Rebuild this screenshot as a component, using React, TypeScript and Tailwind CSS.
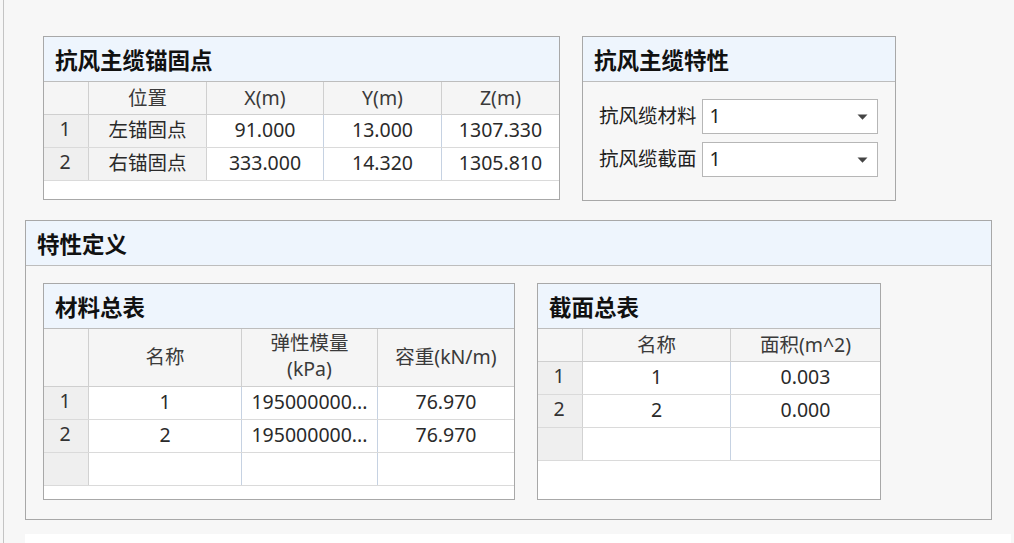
import React from "react";

type Col = { w?: number; label: React.ReactNode };

function Panel({
  title,
  className,
  children,
}: {
  title: string;
  className?: string;
  children?: React.ReactNode;
}) {
  return (
    <div
      className={
        "flex shrink-0 flex-col border border-[#a8a8a8] bg-[#f7f7f7] " + (className ?? "")
      }
    >
      <div className="flex h-[45px] shrink-0 items-center border-b border-[#bdbdbd] bg-[#eef5fd] pl-[11px]">
        <span className="font-['Noto_Sans_CJK_SC',sans-serif] text-[22.5px] font-bold leading-none text-[#111]">
          {title}
        </span>
      </div>
      {children}
    </div>
  );
}

function Grid({
  cols,
  headH,
  rows,
  greyCols = [],
}: {
  cols: Col[];
  headH: number;
  rows: (string | null)[][];
  greyCols?: number[];
}) {
  return (
    <div className="flex flex-1 flex-col bg-white">
      {/* column headers */}
      <div
        className="flex shrink-0 border-b border-[#cfcfcf] bg-[#f5f5f5]"
        style={{ height: headH }}
      >
        <div className="w-[45px] shrink-0 border-r border-[#cfcfcf]" />
        {cols.map((c, i) => (
          <div
            key={i}
            className={
              "flex items-center justify-center pb-[1px] text-center text-[#3a3a3a] " +
              (i < cols.length - 1 ? "shrink-0 border-r border-[#cfcfcf]" : "flex-1")
            }
            style={c.w ? { width: c.w } : undefined}
          >
            {c.label}
          </div>
        ))}
      </div>
      {rows.map((r, ri) => (
        <div key={ri} className="flex h-[33px] shrink-0 border-b border-[#dadada]">
          <div className="flex w-[45px] shrink-0 items-center justify-center border-r border-[#d2d2d2] bg-[#efefef] pr-[2px] pb-[4px] text-[#333]">
            {r[0] !== null ? String(ri + 1) : ""}
          </div>
          {cols.map((c, ci) => {
            const grey = greyCols.includes(ci);
            const last = ci === cols.length - 1;
            return (
              <div
                key={ci}
                className={
                  "flex items-center justify-center pb-[2px] text-[#2a2a2a] " +
                  (grey ? "bg-[#f3f3f3] " : "bg-white ") +
                  (last
                    ? "flex-1"
                    : "shrink-0 border-r " +
                      (grey ? "border-[#d2d2d2]" : "border-[#c6d2e2]"))
                }
                style={c.w ? { width: c.w } : undefined}
              >
                {r[ci + 1] ?? ""}
              </div>
            );
          })}
        </div>
      ))}
    </div>
  );
}

function Select({ value }: { value: string }) {
  return (
    <div className="flex h-[35px] w-[176px] items-center justify-between border border-[#b6b6b6] bg-white pl-[7px] pr-[9px]">
      <span className="pb-[2px] text-[#222]">{value}</span>
      <svg width="11" height="6" viewBox="0 0 11 6">
        <path d="M0.5 0.5 L10.5 0.5 L5.5 5.8 Z" fill="#444" />
      </svg>
    </div>
  );
}

export default function App() {
  return (
    <div className="flex h-[543px] w-[1014px] overflow-hidden bg-[#f7f7f7] font-['Noto_Sans','Noto_Sans_CJK_SC',sans-serif] text-[19.5px]">
      <div className="w-[3px] shrink-0" />
      <div className="w-px shrink-0 bg-[#c4c4c4]" />
      <div className="flex flex-1 flex-col pl-[21px] pt-[36px]">
        {/* top row */}
        <div className="ml-[18px] flex shrink-0 gap-[22px]">
          <Panel title="抗风主缆锚固点" className="h-[164px] w-[517px]">
            <Grid
              headH={33}
              cols={[
                { w: 118, label: "位置" },
                { w: 117, label: "X(m)" },
                { w: 118, label: "Y(m)" },
                { label: "Z(m)" },
              ]}
              greyCols={[0]}
              rows={[
                ["1", "左锚固点", "91.000", "13.000", "1307.330"],
                ["2", "右锚固点", "333.000", "14.320", "1305.810"],
              ]}
            />
          </Panel>
          <Panel title="抗风主缆特性" className="h-[165px] w-[314px]">
            <div className="flex flex-col gap-[8px] pl-[16px] pt-[17px]">
              <div className="flex items-center gap-[5px]">
                <span className="pb-[2px] text-[#222]">抗风缆材料</span>
                <Select value="1" />
              </div>
              <div className="flex items-center gap-[5px]">
                <span className="pb-[2px] text-[#222]">抗风缆截面</span>
                <Select value="1" />
              </div>
            </div>
          </Panel>
        </div>

        {/* property definitions */}
        <Panel title="特性定义" className="mt-[19px] h-[300px] w-[967px]">
          <div className="flex gap-[22px] pl-[17px] pt-[17px]">
            <Panel title="材料总表" className="h-[217px] w-[472px]">
              <Grid
                headH={58}
                cols={[
                  { w: 153, label: "名称" },
                  {
                    w: 136,
                    label: (
                      <div className="flex flex-col items-center pb-[2px] leading-[26px]">
                        <div>弹性模量</div>
                        <div>(kPa)</div>
                      </div>
                    ),
                  },
                  { label: "容重(kN/m)" },
                ]}
                rows={[
                  ["1", "1", "195000000...", "76.970"],
                  ["2", "2", "195000000...", "76.970"],
                  [null, "", "", ""],
                ]}
              />
            </Panel>
            <Panel title="截面总表" className="h-[217px] w-[344px]">
              <Grid
                headH={33}
                cols={[
                  { w: 148, label: "名称" },
                  { label: "面积(m^2)" },
                ]}
                rows={[
                  ["1", "1", "0.003"],
                  ["2", "2", "0.000"],
                  [null, "", ""],
                ]}
              />
            </Panel>
          </div>
        </Panel>

        <div className="mt-[14px] h-[40px] w-[986px] shrink-0 bg-white" />
      </div>
    </div>
  );
}
